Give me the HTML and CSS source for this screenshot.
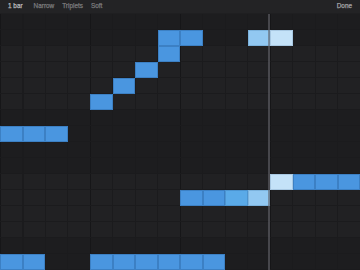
FILE: index.html
```html
<!DOCTYPE html>
<html lang="en">
<head>
    <meta charset="UTF-8">
    <meta name="viewport" content="width=device-width, initial-scale=1.0">
    <title>Step Editor</title>
    <link rel="stylesheet" href="styles.css">
</head>
<body>

    <div id="toolbar">
        <span class="tool active">1 bar</span>
        <span class="tool">Narrow</span>
        <span class="tool">Triplets</span>
        <span class="tool">Soft</span>
        <span class="tool done">Done</span>
    </div>

    <div id="roll">
        <!-- rows and notes are filled in below -->
        <div id="playhead"></div>
    </div>

    <script>
        const roll = document.getElementById('roll');

        // 0 = dark row, 1 = light row
        const shades = [0,0,1,1,1,1,0,0,0,0,1,1,1,1,0,0];

        // [row, column, tone]
        const notes = [
            [1, 7], [1, 8], [1, 11, 'light'], [1, 12, 'pale'],
            [2, 7], [3, 6], [4, 5], [5, 4],
            [7, 0], [7, 1], [7, 2],
            [10, 12, 'pale'], [10, 13], [10, 14], [10, 15],
            [11, 8], [11, 9], [11, 10, 'mid'], [11, 11, 'light'],
            [15, 0], [15, 1], [15, 4], [15, 5], [15, 6], [15, 7], [15, 8], [15, 9]
        ];

        shades.forEach((shade, i) => {
            let row = document.createElement('div');
            row.classList.add('lane', shade ? 'lane-light' : 'lane-dark');
            row.style.gridRow = i + 1;
            roll.appendChild(row);
        });

        notes.forEach(([r, c, tone]) => {
            let note = document.createElement('div');
            note.classList.add('note');
            if (tone) note.classList.add(tone);
            note.style.gridRow = r + 1;
            note.style.gridColumn = c + 1;
            roll.appendChild(note);
        });
    </script>

</body>
</html>
```

FILE: styles.css
```css
body {
    margin: 0;
    padding: 0;
    width: 360px;
    height: 270px;
    overflow: hidden;
    background-color: #1c1c1e;
    font-family: "Liberation Sans", Arial, sans-serif;
}
#toolbar {
    height: 14px;
    display: flex;
    align-items: center;
    padding: 0 8px;
    gap: 8px;
    background-color: #232325;
    box-sizing: border-box;
    border-bottom: 1px solid #1f1f21;
}
.tool {
    font-size: 6.4px;
    color: #7a7a7c;
    -webkit-text-stroke: 0.25px currentColor;
    line-height: 1;
}
.tool.active {
    color: #b8b8ba;
    margin-right: 3px;
}
.tool.done {
    margin-left: auto;
    color: #a4a4a6;
}
#roll {
    position: relative;
    display: grid;
    grid-template-columns: repeat(16, 1fr);
    grid-template-rows: repeat(16, 16px);
    height: 256px;
}
.lane {
    grid-column: 1 / -1;
    border-bottom: 1px solid #1b1b1d;
    background-image:
        repeating-linear-gradient(to right, #161618 0 1px, transparent 1px 90px),
        repeating-linear-gradient(to right, #1b1b1d 0 1px, transparent 1px 22.5px);
}
.lane-dark {
    background-color: #1d1d1f;
}
.lane-light {
    background-color: #212123;
}
.note {
    background-color: #4a96e0;
    border: 1px solid #3c80c4;
    box-sizing: border-box;
}
.note.mid {
    background-color: #5aaae8;
    border-color: #4c94d0;
}
.note.light {
    background-color: #92c8f1;
    border-color: #7cb2dc;
}
.note.pale {
    background-color: #c4e2f8;
    border-color: #a8c8e2;
}
#playhead {
    position: absolute;
    top: 0;
    bottom: 0;
    left: 267.5px;
    width: 2px;
    background-color: rgba(100, 100, 106, 0.6);
}
```
